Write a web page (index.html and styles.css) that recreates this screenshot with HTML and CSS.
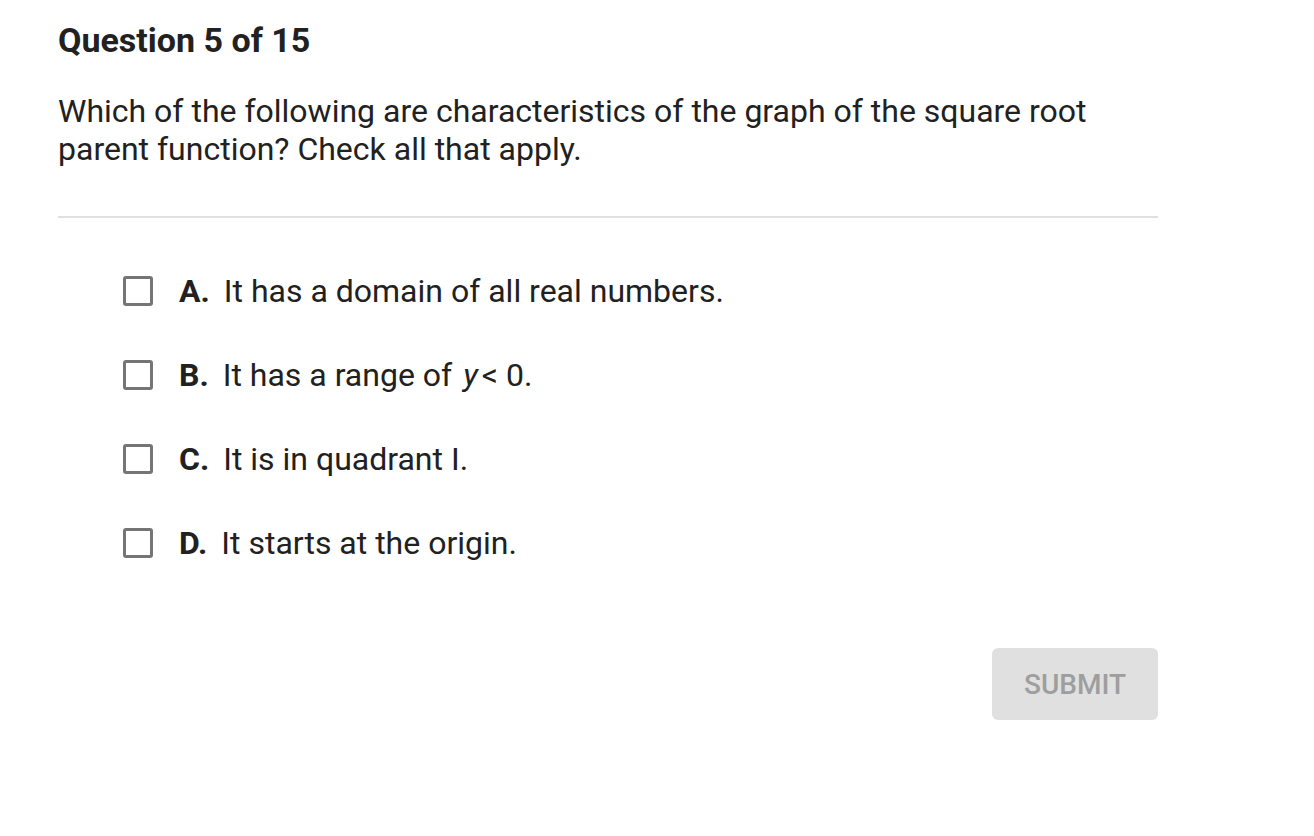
FILE: index.html
```html
<!DOCTYPE html>
<html>
<head>
<meta charset="utf-8">
<link rel="stylesheet" href="styles.css">
</head>
<body>
<div class="page">
  <h1 class="title">Question 5 of 15</h1>
  <p class="question">Which of the following are characteristics of the graph of the square root parent function? Check all that apply.</p>
  <hr class="divider">
  <ul class="options">
    <li class="option"><span class="box"></span><span class="letter">A.</span><span class="text">It has a domain of all real numbers.</span></li>
    <li class="option"><span class="box"></span><span class="letter">B.</span><span class="text">It has a range of <i class="var">y</i>&lt; 0.</span></li>
    <li class="option"><span class="box"></span><span class="letter">C.</span><span class="text">It is in quadrant I.</span></li>
    <li class="option"><span class="box"></span><span class="letter">D.</span><span class="text">It starts at the origin.</span></li>
  </ul>
  <div class="actions"><button class="submit">SUBMIT</button></div>
</div>
</body>
</html>
```
FILE: styles.css
```css
html, body { margin: 0; padding: 0; background: #fff; }
body { font-family: Roboto, "Liberation Sans", sans-serif; color: #212121; }
.page { width: 1100px; padding: 20px 0 0 58px; }
.title { margin: 0; font-size: 34px; font-weight: 700; line-height: 40px; color: #212121; }
.question { margin: 32px 0 0; font-size: 32px; line-height: 38px; font-weight: 400; width: 1080px; }
.divider { margin: 48px 0 0; border: 0; height: 2px; background: #e0e0e0; }
.options { list-style: none; margin: 0; padding: 55px 0 0 65px; display: flex; flex-direction: column; gap: 48px; }
.option { display: flex; align-items: center; height: 36px; font-size: 32px; }
.box { width: 24px; height: 24px; border: 3px solid #757575; border-radius: 3px; box-sizing: content-box; flex: none; }
.letter { font-weight: 700; margin-left: 26px; margin-right: 14px; }
.var { font-style: italic; margin-left: 3px; margin-right: 4px; }
.actions { display: flex; justify-content: flex-end; margin-top: 87px; }
.submit { width: 166px; height: 72px; border: 0; border-radius: 6px; background: #e0e0e0; color: #9e9e9e; font-family: Roboto, sans-serif; font-size: 28px; font-weight: 500; padding: 0; }
```
